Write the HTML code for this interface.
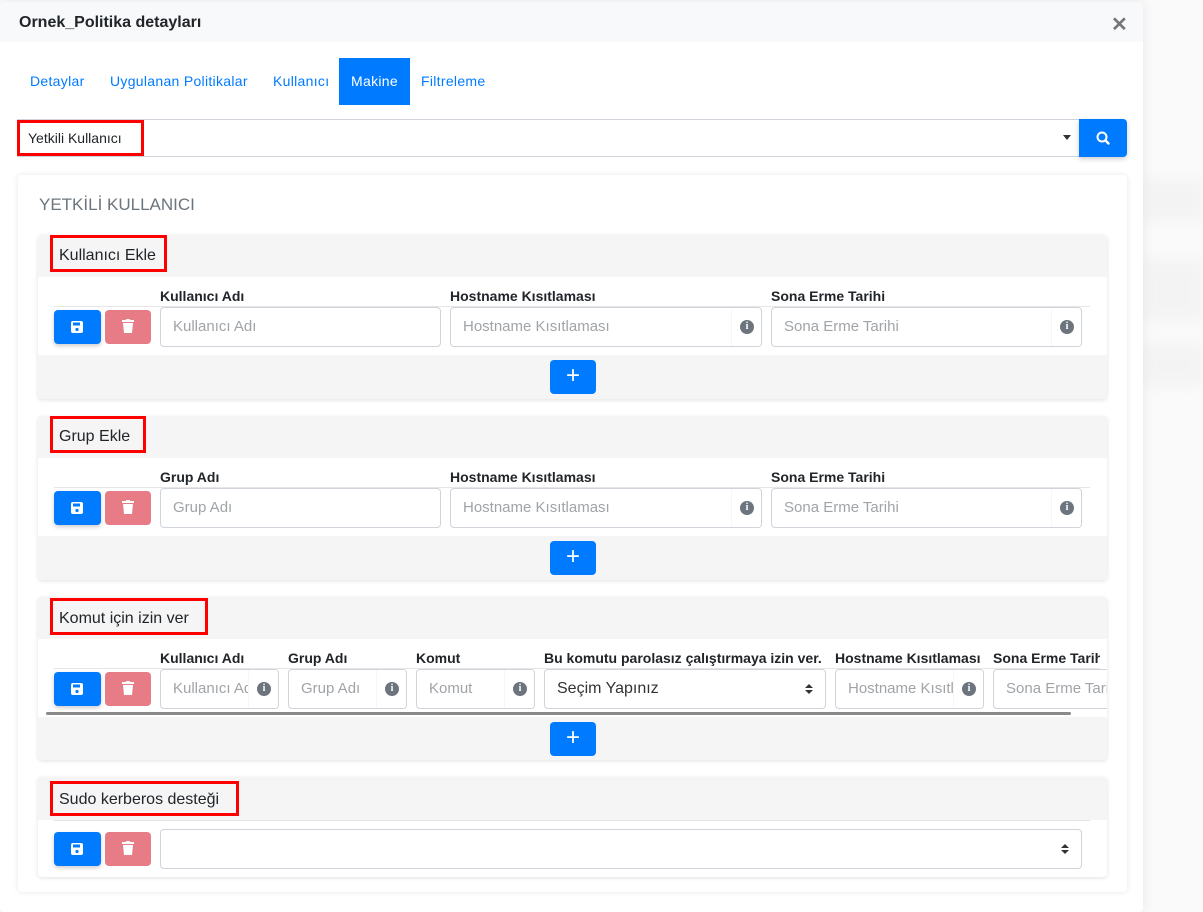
<!DOCTYPE html>
<html><head><meta charset="utf-8"><style>
*{box-sizing:border-box;margin:0;padding:0}
body{width:1203px;height:902px;background:#fafafa;font-family:"Liberation Sans",sans-serif;position:relative;overflow:hidden;color:#212529}
.a{position:absolute}
.modal{left:0;top:2px;width:1143px;height:910px;background:#fff;box-shadow:0 0 12px rgba(0,0,0,.08);border-radius:4px}
.hdr{left:0;top:2px;width:1143px;height:40px;background:#f8f9fa;border-radius:4px 4px 0 0}
.tab{top:58px;height:47px;line-height:47px;font-size:14px;color:#007bff;letter-spacing:.3px}
.lbl{font-size:14px;font-weight:bold;color:#212529}
.inp{height:40px;border:1px solid #ced4da;border-radius:4px;background:#fff;font-size:15px;color:#a0a4a8;line-height:38px;padding-left:12px;white-space:nowrap;overflow:hidden}
.info{position:absolute;right:0;top:0;width:30px;height:38px;border-left:1px solid #f6f6f6;background:#fff}
.info i{position:absolute;left:8px;top:12px;width:14px;height:14px;border-radius:50%;background:#6c757d;color:#fff;font-size:10px;font-weight:bold;font-style:normal;line-height:14px;text-align:center;font-family:"Liberation Serif",serif}
.sec{left:38px;width:1069px;background:#f5f5f5;border-radius:4px;box-shadow:0 1px 4px rgba(0,0,0,.12)}
.sh{font-size:16px;color:#212529}
.red{border:3px solid #f00}
.body{left:0;width:1069px;background:#fff}
.btn{width:47px;height:34px;border-radius:4px}
.save{background:#007bff;box-shadow:0 2px 4px rgba(0,0,0,.2)}
.del{background:#e77c86;width:46px}
.plus{width:46px;height:34px;background:#007bff;border-radius:4px;color:#fff;font-size:24px;text-align:center;line-height:32px}
.sep{height:1px;background:#e6e6e6}
</style></head><body>
<div class="a" style="left:1143px;top:180px;width:60px;height:40px;background:#f3f3f3;filter:blur(6px)"></div>
<div class="a" style="left:1143px;top:260px;width:60px;height:60px;background:#f3f3f3;filter:blur(6px)"></div>
<div class="a" style="left:1143px;top:345px;width:60px;height:40px;background:#f3f3f3;filter:blur(6px)"></div>
<div class="a modal"></div>
<div class="a hdr"></div>
<div class="a" style="left:19px;top:14px;font-size:16px;font-weight:bold;color:#212529">Ornek_Politika detayları</div>
<div class="a" style="left:1111px;top:12px;font-size:20px;font-weight:bold;color:#777">✕</div>

<div class="a tab" style="left:30px">Detaylar</div>
<div class="a tab" style="left:110px">Uygulanan Politikalar</div>
<div class="a tab" style="left:273px">Kullanıcı</div>
<div class="a tab" style="left:339px;width:71px;background:#007bff;color:#fff;text-align:center">Makine</div>
<div class="a tab" style="left:421px">Filtreleme</div>

<div class="a" style="left:17px;top:119px;width:1062px;height:38px;border:1px solid #ced4da;border-right:none;background:#fff"></div>
<div class="a red" style="left:17px;top:120px;width:127px;height:36px;background:#fff"></div>
<div class="a" style="left:28px;top:130px;font-size:14px;color:#212529">Yetkili Kullanıcı</div>
<div class="a" style="left:1063px;top:135px;width:0;height:0;border-left:4px solid transparent;border-right:4px solid transparent;border-top:5px solid #333"></div>
<div class="a" style="left:1079px;top:119px;width:48px;height:38px;background:#007bff;border-radius:0 4px 4px 0;box-shadow:0 2px 5px rgba(0,0,0,.2)">
<svg width="48" height="38"><circle cx="23" cy="18" r="4.5" fill="none" stroke="#fff" stroke-width="2"/><line x1="26.5" y1="21.5" x2="29.5" y2="24.5" stroke="#fff" stroke-width="2.4" stroke-linecap="round"/></svg></div>

<div class="a" style="left:18px;top:175px;width:1109px;height:717px;background:#fff;border-radius:4px;box-shadow:0 0 6px rgba(0,0,0,.1)"></div>
<div class="a" style="left:39px;top:195px;font-size:17px;color:#6c757d">YETKİLİ KULLANICI</div>

<!-- Section 1 -->
<div class="a sec" style="top:235px;height:164px">
 <div class="a red" style="left:12px;top:0;width:117px;height:37px"></div>
 <div class="a sh" style="left:21px;top:12px">Kullanıcı Ekle</div>
 <div class="a body" style="top:42px;height:78px">
  <div class="a lbl" style="left:122px;top:11px">Kullanıcı Adı</div>
  <div class="a lbl" style="left:412px;top:11px">Hostname Kısıtlaması</div>
  <div class="a lbl" style="left:733px;top:11px">Sona Erme Tarihi</div>
  <div class="a sep" style="left:16px;top:29px;width:1036px"></div>
  <div class="a btn save" style="left:16px;top:33px"><svg width="47" height="34"><rect x="17" y="11" width="12" height="12" rx="2" fill="#fff"/><rect x="19" y="12.5" width="7" height="3" fill="#007bff"/><circle cx="23" cy="19.5" r="1.6" fill="#007bff"/></svg></div>
  <div class="a btn del" style="left:67px;top:33px"><svg width="46" height="34"><rect x="17" y="10" width="12" height="2" fill="#fff"/><rect x="21" y="9" width="4" height="2" fill="#fff"/><path d="M18 13h10l-1 10h-8z" fill="#fff"/></svg></div>
  <div class="a inp" style="left:122px;top:30px;width:281px">Kullanıcı Adı</div>
  <div class="a inp" style="left:412px;top:30px;width:312px">Hostname Kısıtlaması<div class="info"><i>i</i></div></div>
  <div class="a inp" style="left:733px;top:30px;width:311px">Sona Erme Tarihi<div class="info"><i>i</i></div></div>
 </div>
 <div class="a plus" style="left:512px;top:125px">+</div>
</div>

<!-- Section 2 -->
<div class="a sec" style="top:416px;height:164px">
 <div class="a red" style="left:12px;top:0;width:96px;height:37px"></div>
 <div class="a sh" style="left:21px;top:12px">Grup Ekle</div>
 <div class="a body" style="top:42px;height:78px">
  <div class="a lbl" style="left:122px;top:11px">Grup Adı</div>
  <div class="a lbl" style="left:412px;top:11px">Hostname Kısıtlaması</div>
  <div class="a lbl" style="left:733px;top:11px">Sona Erme Tarihi</div>
  <div class="a sep" style="left:16px;top:29px;width:1036px"></div>
  <div class="a btn save" style="left:16px;top:33px"><svg width="47" height="34"><rect x="17" y="11" width="12" height="12" rx="2" fill="#fff"/><rect x="19" y="12.5" width="7" height="3" fill="#007bff"/><circle cx="23" cy="19.5" r="1.6" fill="#007bff"/></svg></div>
  <div class="a btn del" style="left:67px;top:33px"><svg width="46" height="34"><rect x="17" y="10" width="12" height="2" fill="#fff"/><rect x="21" y="9" width="4" height="2" fill="#fff"/><path d="M18 13h10l-1 10h-8z" fill="#fff"/></svg></div>
  <div class="a inp" style="left:122px;top:30px;width:281px">Grup Adı</div>
  <div class="a inp" style="left:412px;top:30px;width:312px">Hostname Kısıtlaması<div class="info"><i>i</i></div></div>
  <div class="a inp" style="left:733px;top:30px;width:311px">Sona Erme Tarihi<div class="info"><i>i</i></div></div>
 </div>
 <div class="a plus" style="left:512px;top:125px">+</div>
</div>

<!-- Section 3 -->
<div class="a sec" style="top:597px;height:163px">
 <div class="a red" style="left:12px;top:1px;width:158px;height:37px"></div>
 <div class="a sh" style="left:21px;top:13px">Komut için izin ver</div>
 <div class="a body" style="top:42px;height:78px;overflow:hidden">
  <div class="a lbl" style="left:122px;top:11px">Kullanıcı Adı</div>
  <div class="a lbl" style="left:250px;top:11px">Grup Adı</div>
  <div class="a lbl" style="left:378px;top:11px">Komut</div>
  <div class="a lbl" style="left:506px;top:11px">Bu komutu parolasız çalıştırmaya izin ver.</div>
  <div class="a lbl" style="left:797px;top:11px">Hostname Kısıtlaması</div>
  <div class="a lbl" style="left:955px;top:11px;width:107px;overflow:hidden;white-space:nowrap">Sona Erme Tarihi</div>
  <div class="a sep" style="left:16px;top:29px;width:1046px"></div>
  <div class="a btn save" style="left:16px;top:33px"><svg width="47" height="34"><rect x="17" y="11" width="12" height="12" rx="2" fill="#fff"/><rect x="19" y="12.5" width="7" height="3" fill="#007bff"/><circle cx="23" cy="19.5" r="1.6" fill="#007bff"/></svg></div>
  <div class="a btn del" style="left:67px;top:33px"><svg width="46" height="34"><rect x="17" y="10" width="12" height="2" fill="#fff"/><rect x="21" y="9" width="4" height="2" fill="#fff"/><path d="M18 13h10l-1 10h-8z" fill="#fff"/></svg></div>
  <div class="a inp" style="left:122px;top:30px;width:119px">Kullanıcı Adı<div class="info"><i>i</i></div></div>
  <div class="a inp" style="left:250px;top:30px;width:119px">Grup Adı<div class="info"><i>i</i></div></div>
  <div class="a inp" style="left:378px;top:30px;width:119px">Komut<div class="info"><i>i</i></div></div>
  <div class="a inp" style="left:506px;top:30px;width:282px;color:#333;font-size:16px">Seçim Yapınız<svg class="a" style="right:12px;top:13px" width="8" height="12"><path d="M0 5L4 1L8 5Z M0 7L4 11L8 7Z" fill="#333"/></svg></div>
  <div class="a inp" style="left:797px;top:30px;width:149px">Hostname Kısıtlaması<div class="info"><i>i</i></div></div>
  <div class="a inp" style="left:955px;top:30px;width:130px">Sona Erme Tarihi<div class="info" style="right:-14px;width:28px"><i>i</i></div></div>
  <div class="a" style="left:8px;top:73px;width:1025px;height:3px;background:#8a8a8a;border-radius:2px"></div>
 </div>
 <div class="a plus" style="left:512px;top:125px">+</div>
</div>

<!-- Section 4 -->
<div class="a sec" style="top:777px;height:100px">
 <div class="a red" style="left:12px;top:4px;width:189px;height:35px"></div>
 <div class="a sh" style="left:21px;top:14px">Sudo kerberos desteği</div>
 <div class="a body" style="top:43px;height:57px;border-radius:0 0 4px 4px">
  <div class="a sep" style="left:16px;top:0;width:1036px"></div>
  <div class="a btn save" style="left:16px;top:12px"><svg width="47" height="34"><rect x="17" y="11" width="12" height="12" rx="2" fill="#fff"/><rect x="19" y="12.5" width="7" height="3" fill="#007bff"/><circle cx="23" cy="19.5" r="1.6" fill="#007bff"/></svg></div>
  <div class="a btn del" style="left:67px;top:12px"><svg width="46" height="34"><rect x="17" y="10" width="12" height="2" fill="#fff"/><rect x="21" y="9" width="4" height="2" fill="#fff"/><path d="M18 13h10l-1 10h-8z" fill="#fff"/></svg></div>
  <div class="a inp" style="left:122px;top:9px;width:922px"><svg class="a" style="right:12px;top:13px" width="8" height="12"><path d="M0 5L4 1L8 5Z M0 7L4 11L8 7Z" fill="#333"/></svg></div>
 </div>
</div>
</body></html>
